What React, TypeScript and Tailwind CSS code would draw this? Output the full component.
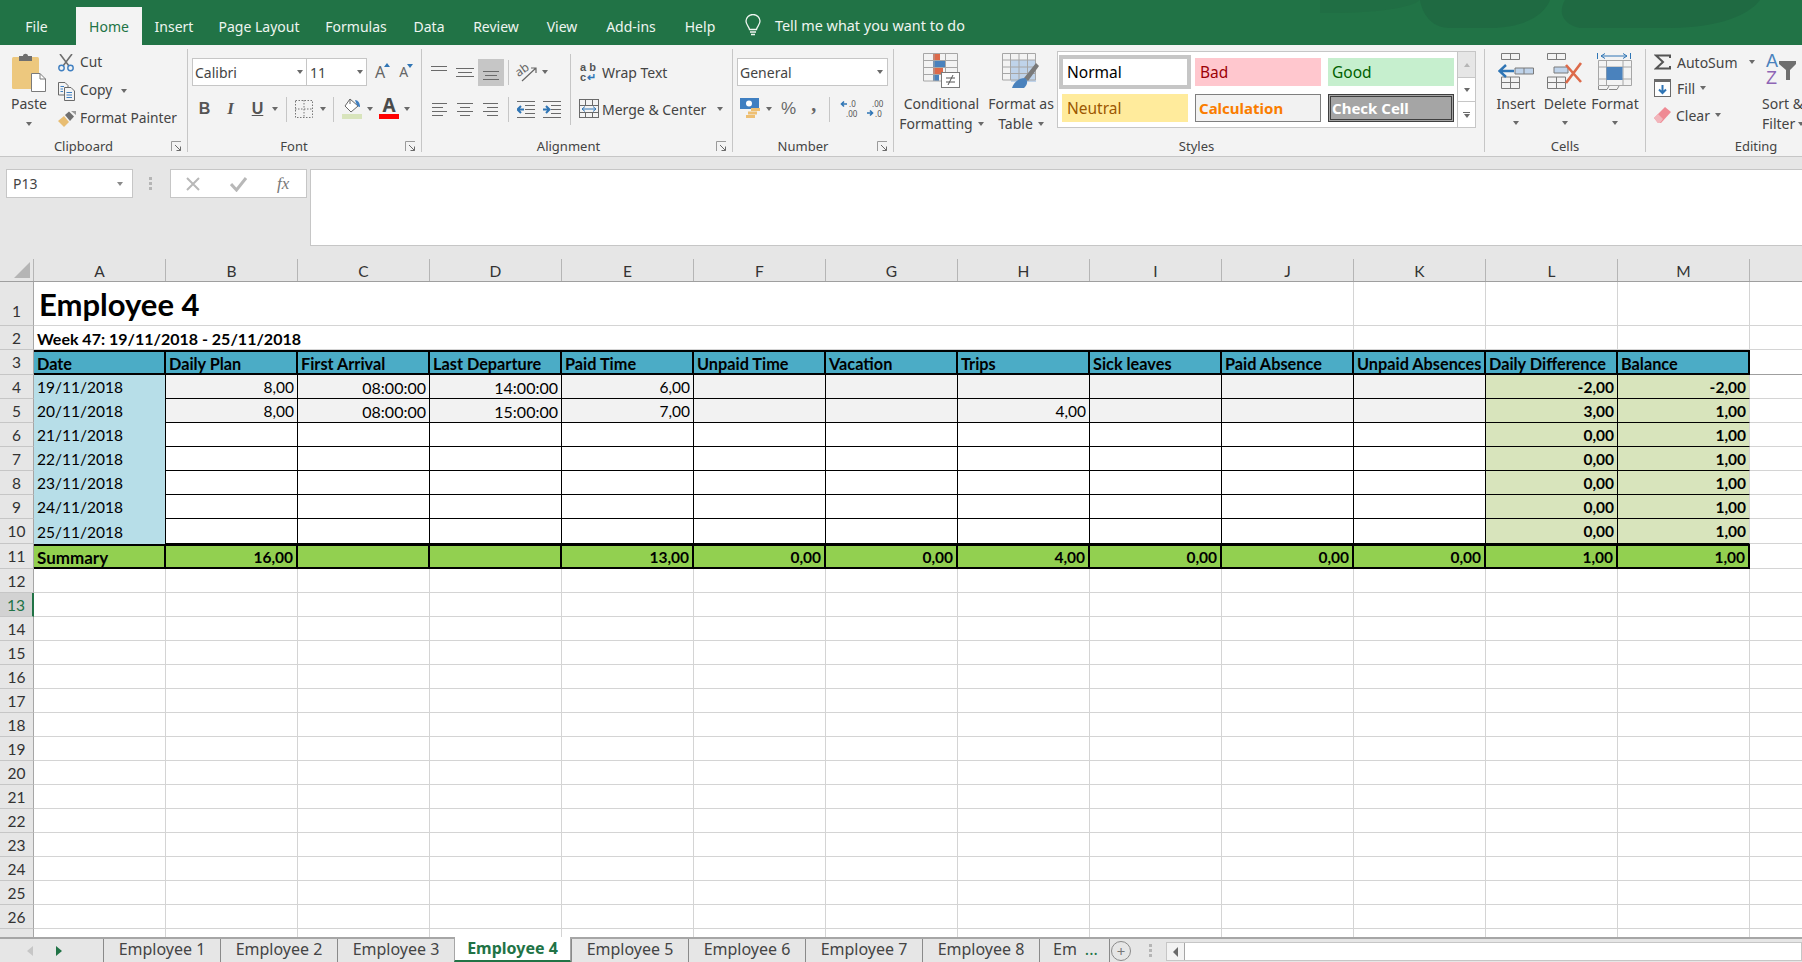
import type { ReactNode } from "react";

const tabs = [
  { label: "Insert", width: "w-[64px]" },
  { label: "Page Layout", width: "w-[106px]" },
  { label: "Formulas", width: "w-[88px]" },
  { label: "Data", width: "w-[58px]" },
  { label: "Review", width: "w-[76px]" },
  { label: "View", width: "w-[56px]" },
  { label: "Add-ins", width: "w-[82px]" },
  { label: "Help", width: "w-[56px]" },
];
const columns = ["A", "B", "C", "D", "E", "F", "G", "H", "I", "J", "K", "L", "M"];
const headers = ["Date", "Daily Plan", "First Arrival", "Last Departure", "Paid Time", "Unpaid Time", "Vacation", "Trips", "Sick leaves", "Paid Absence", "Unpaid Absences", "Daily Difference", "Balance"];
const sheetCols = "grid grid-cols-[34px_repeat(13,132px)_1fr]";
const sheetTabs = ["Employee 1", "Employee 2", "Employee 3", "Employee 4", "Employee 5", "Employee 6", "Employee 7", "Employee 8"];

const dataRows = [
  { n: 4, date: "19/11/2018", vals: ["8,00", "08:00:00", "14:00:00", "6,00", "", "", "", "", "", ""], l: "-2,00", m: "-2,00", gray: true },
  { n: 5, date: "20/11/2018", vals: ["8,00", "08:00:00", "15:00:00", "7,00", "", "", "4,00", "", "", ""], l: "3,00", m: "1,00", gray: true },
  { n: 6, date: "21/11/2018", vals: Array(10).fill(""), l: "0,00", m: "1,00", gray: false },
  { n: 7, date: "22/11/2018", vals: Array(10).fill(""), l: "0,00", m: "1,00", gray: false },
  { n: 8, date: "23/11/2018", vals: Array(10).fill(""), l: "0,00", m: "1,00", gray: false },
  { n: 9, date: "24/11/2018", vals: Array(10).fill(""), l: "0,00", m: "1,00", gray: false },
  { n: 10, date: "25/11/2018", vals: Array(10).fill(""), l: "0,00", m: "1,00", gray: false },
];
const summary = ["16,00", "", "", "13,00", "0,00", "0,00", "4,00", "0,00", "0,00", "0,00", "1,00", "1,00"];

const Caret = ({ className = "" }: { className?: string }) => (
  <span className={`inline-block h-0 w-0 border-x-[3.5px] border-t-[4px] border-x-transparent border-t-[#6a6a6a] ${className}`} />
);

const Launcher = () => (
  <svg width="11" height="11" viewBox="0 0 11 11" fill="none">
    <path d="M0.5 10V0.5H10" stroke="#9a9a9a" />
    <path d="M4 4L9.5 9.5M9.5 5.5V9.5H5.5" stroke="#6a6a6a" />
  </svg>
);

const Group = ({ width, label, launcher, labelClass = "", border = true, children }: { width: string; label: string; launcher?: boolean; labelClass?: string; border?: boolean; children: ReactNode }) => (
  <div className={`mt-[4px] flex h-[103px] shrink-0 flex-col ${border ? "border-r border-[#c6c6c6]" : ""} ${width}`}>
    <div className="h-[91px]">{children}</div>
    <div className={`relative flex h-[12px] items-center justify-center text-[13px] leading-none text-[#444] ${labelClass}`}>
      {label}
      {launcher && (
        <span className="absolute right-[5px] top-[1px]">
          <Launcher />
        </span>
      )}
    </div>
  </div>
);

const Lines = ({ w = 18, rows }: { w?: number; rows: number[][] }) => (
  <svg width={w} height="20" viewBox={`0 0 ${w} 20`} stroke="#6a6a6a">
    {rows.map(([a, b, y]) => (
      <path key={`${a}-${y}`} d={`M${a} ${y + 0.5}H${b}`} />
    ))}
  </svg>
);

const Paste = () => (
  <svg width="34" height="39" viewBox="0 0 34 39">
    <rect x="0" y="4" width="27" height="32" rx="1.5" fill="#edc87e" />
    <path d="M7 3H11C11 0 16 0 16 3H20V8H7Z" fill="#6f6f6f" />
    <path d="M19.5 20.5H28L33.5 26V38.5H19.5Z" fill="#fff" stroke="#7a7a7a" />
    <path d="M28 20.5V26H33.5" fill="none" stroke="#7a7a7a" />
  </svg>
);

const Cut = () => (
  <svg width="16" height="18" viewBox="0 0 16 18" fill="none">
    <path d="M2 0L11 12M14 0L5 12" stroke="#6f6f6f" strokeWidth="1.6" />
    <circle cx="3.5" cy="14" r="2.7" stroke="#3f7fc1" strokeWidth="1.4" />
    <circle cx="12.5" cy="14" r="2.7" stroke="#3f7fc1" strokeWidth="1.4" />
  </svg>
);

const Copy = () => (
  <svg width="18" height="19" viewBox="0 0 18 19" fill="none" stroke="#6a6a6a">
    <path d="M0.5 0.5H7L10 3.5V13H0.5Z" fill="#f3f3f3" />
    <path d="M6.5 5.5H13L16.5 9V18.5H6.5Z" fill="#f3f3f3" />
    <path d="M2.5 4.5H6M2.5 7H5M2.5 9.5H5M8.5 10.5H14M8.5 13H14M8.5 15.5H14" stroke="#3f7fc1" />
  </svg>
);

const Painter = () => (
  <svg width="18" height="17" viewBox="0 0 18 17">
    <path d="M0 10L6 5L11 11L6 16C4 14 2 12 0 10Z" fill="#e8bd72" />
    <path d="M7 4L11 0.5L16 5.5L12 10Z" fill="#6f6f6f" />
    <path d="M13 0L18 0L18 4Z" fill="#9a9a9a" />
  </svg>
);

const Borders = () => (
  <svg width="18" height="18" viewBox="0 0 18 18" fill="none" stroke="#777" strokeDasharray="1.5 1.5">
    <rect x="0.5" y="0.5" width="17" height="17" />
    <path d="M9 0V18M0 9H18" />
  </svg>
);

const Fill = () => (
  <svg width="20" height="22" viewBox="0 0 20 22">
    <path d="M8 1L16 8L9 14L3 8Z" fill="#fff" stroke="#666" />
    <path d="M8 1V6" stroke="#666" />
    <path d="M13 2C16 2 18 5 18 9C16 9 15 7 14 5Z" fill="#3f7fc1" />
    <rect x="0" y="16" width="20" height="5" fill="#d8e4bc" />
  </svg>
);

const FontColor = () => (
  <svg className="overflow-visible" width="20" height="22" viewBox="0 0 20 22">
    <text x="10" y="14" textAnchor="middle" fontSize="19" fontWeight="700" fontFamily="'Noto Sans', sans-serif" fill="#4a4a4a">A</text>
    <rect x="0" y="16" width="20" height="5" fill="#ff0000" />
  </svg>
);

const Orientation = () => (
  <svg className="overflow-visible" width="22" height="22" viewBox="0 0 22 22" fill="none" stroke="#666">
    <text x="0" y="12" fontSize="12" fill="#666" stroke="none" transform="rotate(-35 8 10)" fontFamily="'Noto Sans', sans-serif">ab</text>
    <path d="M6 20L20 7M15 7H20V12" strokeWidth="1.2" />
  </svg>
);

const Indent = ({ flip }: { flip?: boolean }) => (
  <svg width="18" height="17" viewBox="0 0 18 17" fill="none">
    <path d="M0 0.5H18M8 4.5H18M8 8.5H18M8 12.5H18M0 16.5H18" stroke="#6a6a6a" />
    {flip ? <path d="M0 8.5H6M3 5L6.5 8.5L3 12" stroke="#2f75b5" strokeWidth="2" /> : <path d="M7 8.5H1M4 5L0.5 8.5L4 12" stroke="#2f75b5" strokeWidth="2" />}
  </svg>
);

const Merge = () => (
  <svg width="20" height="20" viewBox="0 0 20 20" fill="none">
    <rect x="0.5" y="0.5" width="19" height="18" stroke="#6a6a6a" />
    <path d="M0 6.5H20M0 13.5H20M6.5 0V6M13.5 0V6M6.5 14V19M13.5 14V19" stroke="#6a6a6a" />
    <path d="M3 10H17M6 7.5L3 10L6 12.5M14 7.5L17 10L14 12.5" stroke="#2f75b5" />
  </svg>
);

const Currency = () => (
  <svg width="20" height="22" viewBox="0 0 20 22">
    <rect x="0" y="0" width="19" height="11" fill="#3f7fc1" />
    <circle cx="9" cy="5.5" r="3" fill="#fff" />
    <rect x="11" y="10" width="9" height="3" fill="#eebf72" />
    <rect x="8" y="13.5" width="9" height="3" fill="#eebf72" />
    <rect x="6" y="17" width="9" height="3" fill="#eebf72" />
  </svg>
);

const Decimal = ({ more }: { more?: boolean }) => (
  <svg className="overflow-visible" width="18" height="20" viewBox="0 0 18 20" fontFamily="'Noto Sans', sans-serif" fontSize="8" fill="#555">
    {more ? (
      <>
        <path d="M7 5H2M4 2.5L1.5 5L4 7.5" stroke="#2f75b5" strokeWidth="1.6" fill="none" />
        <text x="9" y="8">.0</text>
        <text x="6" y="18">.00</text>
      </>
    ) : (
      <>
        <text x="6" y="8">.00</text>
        <path d="M1 14H6M4 11.5L6.5 14L4 16.5" stroke="#2f75b5" strokeWidth="1.6" fill="none" />
        <text x="9" y="18">.0</text>
      </>
    )}
  </svg>
);

const CondFormat = () => (
  <svg width="38" height="35" viewBox="0 0 38 35">
    <rect x="10" y="0.5" width="7" height="7" fill="#dd6a4a" />
    <rect x="10" y="8" width="12" height="7" fill="#4a82bd" />
    <rect x="10" y="15" width="10" height="7" fill="#dd6a4a" />
    <rect x="10" y="22" width="6" height="6" fill="#4a82bd" />
    <path d="M0.5 0.5H34.5V28H0.5ZM11 0V28M22.5 0V28M0 7.5H35M0 14.5H35M0 21.5H35" fill="none" stroke="#a6a6a6" />
    <rect x="18.5" y="19.5" width="18" height="15" fill="#fff" stroke="#7a7a7a" />
    <path d="M23 25H32M23 29H32M30 22L25 32" stroke="#555" fill="none" />
  </svg>
);

const FormatTable = () => (
  <svg width="38" height="35" viewBox="0 0 38 35">
    <rect x="9" y="7" width="25" height="22" fill="#bfd3ea" />
    <path d="M0.5 0.5H33.5V27H0.5ZM8.5 0V27M17 0V27M25.5 0V27M0 7H34M0 14H34M0 20.5H34" fill="none" stroke="#a6a6a6" />
    <path d="M22 25L34 10L37 13L26 28Z" fill="#7a7a7a" />
    <path d="M10 35C12 28 18 25 23 25C26 27 26 31 22 35Z" fill="#4a82bd" />
  </svg>
);

const InsertIcon = () => (
  <svg width="37" height="36" viewBox="0 0 37 36" fill="none" stroke="#7a7a7a">
    <path d="M3.5 0.5H21.5V6.5H3.5ZM12.5 0V6M3.5 24H21.5V35.5H3.5ZM3.5 29.5H21.5M12.5 24V36" />
    <path d="M17 15H35.5V21H17ZM26 15V21" fill="#bfd3ea" />
    <path d="M16 18H2M8 12L1.5 18L8 24" stroke="#2f75b5" strokeWidth="2.4" />
  </svg>
);

const DeleteIcon = () => (
  <svg width="36" height="36" viewBox="0 0 36 36" fill="none" stroke="#7a7a7a">
    <path d="M0.5 0.5H18.5V6.5H0.5ZM9.5 0V6M0.5 24H18.5V35.5H0.5ZM0.5 29.5H18.5M9.5 24V36" />
    <path d="M7 14H21V20H7Z" fill="#bfd3ea" />
    <path d="M19 12L34 29M34 10L19 30" stroke="#dd6a4a" strokeWidth="2.6" />
  </svg>
);

const FormatIcon = () => (
  <svg width="36" height="37" viewBox="0 0 36 37" fill="none">
    <path d="M0.5 0V6M33.5 0V6M4 3H30M8 0.5L4 3L8 5.5M26 0.5L30 3L26 5.5" stroke="#2f75b5" />
    <path d="M1.5 7.5H34.5V32.5H1.5ZM9.5 8V32M26 8V32M1 14H35M1 26H35" stroke="#a6a6a6" />
    <rect x="9.5" y="14" width="16" height="13" fill="#4a82bd" />
    <path d="M1.5 33V36.5H10L12 33M12 36.5H20L22 33" stroke="#8a8a8a" />
  </svg>
);

const LargeButton = ({ icon, lines, caret, width }: { icon: ReactNode; lines: string[]; caret?: boolean; width: string }) => (
  <div className={`flex shrink-0 flex-col items-center ${width}`}>
    <div className="flex h-[45px] items-start pt-[4px]">{icon}</div>
    {lines.map((line, i) => (
      <div key={line} className="flex h-[20px] items-center gap-[5px] whitespace-nowrap text-[14px] leading-none text-[#444]">
        {line}
        {caret && i === lines.length - 1 && <Caret />}
      </div>
    ))}
  </div>
);

const ClipboardGroup = () => (
  <Group width="w-[188px]" label="Clipboard" launcher labelClass="pr-[20px]">
    <div className="flex">
      <div className="flex w-[58px] flex-col items-center pt-[4px]">
        <Paste />
        <div className="mt-[2px] text-[14px] leading-[20px] text-[#444]">Paste</div>
        <Caret className="mt-[8px]" />
      </div>
      <div className="flex flex-col text-[13.8px] text-[#444]">
        <div className="flex h-[28px] items-center">
          <span className="flex w-[22px] justify-start"><Cut /></span>
          <span className="mt-[-2px]">Cut</span>
        </div>
        <div className="flex h-[28px] items-center">
          <span className="flex w-[22px] justify-start"><Copy /></span>
          <span className="mt-[-2px]">Copy</span>
          <Caret className="ml-[9px]" />
        </div>
        <div className="flex h-[28px] items-center">
          <span className="flex w-[22px] justify-start"><Painter /></span>
          <span className="mt-[-2px]">Format Painter</span>
        </div>
      </div>
    </div>
  </Group>
);

const FontGroup = () => (
  <Group width="w-[234px]" label="Font" launcher labelClass="pr-[21px]">
    <div className="flex flex-col gap-[9px] pl-[4px] pt-[9px]">
      <div className="flex h-[28px] items-center">
        <div className="flex h-[28px] w-[115px] items-center justify-between border border-[#c6c6c6] bg-white pl-[2px] pr-[3px] text-[14px] text-[#444]">
          Calibri <Caret />
        </div>
        <div className="flex h-[28px] w-[60px] items-center justify-between border border-l-0 border-[#c6c6c6] bg-white pl-[3px] pr-[3px] text-[14px] text-[#444]">
          11 <Caret />
        </div>
        <span className="ml-[8px] flex items-start text-[16px] leading-none text-[#666]">
          A<span className="ml-[-1px] mt-[-1px] h-0 w-0 border-x-[3px] border-b-[4px] border-x-transparent border-b-[#2f75b5]" />
        </span>
        <span className="ml-[9px] flex items-start text-[14px] leading-none text-[#666]">
          A<span className="ml-[-1px] mt-[-1px] h-0 w-0 border-x-[3px] border-t-[4px] border-x-transparent border-t-[#2f75b5]" />
        </span>
      </div>
      <div className="flex h-[28px] items-center pl-[1px]">
        <span className="w-[23px] text-center font-['Liberation_Sans',sans-serif] text-[16px] font-bold text-[#555]">B</span>
        <span className="ml-[3px] w-[23px] text-center font-['Liberation_Serif',serif] text-[17px] font-bold italic text-[#555]">I</span>
        <span className="ml-[4px] w-[23px] text-center font-['Liberation_Sans',sans-serif] text-[16px] font-bold text-[#555] underline">U</span>
        <Caret className="ml-[3px]" />
        <div className="ml-[8px] h-[25px] w-px bg-[#c6c6c6]" />
        <span className="ml-[8px]"><Borders /></span>
        <Caret className="ml-[7px]" />
        <div className="ml-[7px] h-[25px] w-px bg-[#c6c6c6]" />
        <span className="ml-[8px]"><Fill /></span>
        <Caret className="ml-[5px]" />
        <span className="ml-[6px]"><FontColor /></span>
        <Caret className="ml-[5px]" />
      </div>
    </div>
  </Group>
);

const AlignmentGroup = () => (
  <Group width="w-[311px]" label="Alignment" launcher labelClass="pr-[17px]">
    <div className="flex pl-[8px] pt-[5px]">
      <div className="flex flex-col gap-[9px] pt-[4px]">
        <div className="flex h-[28px] items-center">
          <Lines rows={[[1, 17, 4], [1, 17, 8]]} />
          <span className="ml-[8px]"><Lines rows={[[0, 18, 6], [2, 16, 10], [0, 18, 14]]} /></span>
          <span className="ml-[4px] flex h-[27px] w-[26px] items-center justify-center bg-[#c6c6c6]">
            <Lines rows={[[2, 18, 9], [4, 16, 13], [2, 18, 17]]} w={20} />
          </span>
          <div className="ml-[4px] h-[25px] w-px bg-[#c6c6c6]" />
          <span className="ml-[7px]"><Orientation /></span>
          <Caret className="ml-[4px]" />
        </div>
        <div className="flex h-[28px] items-center">
          <span className="ml-[2px]"><Lines rows={[[0, 15, 4], [0, 11, 8], [0, 15, 12], [0, 11, 16]]} w={16} /></span>
          <span className="ml-[9px]"><Lines rows={[[0, 16, 4], [3, 13, 8], [0, 16, 12], [3, 13, 16]]} w={16} /></span>
          <span className="ml-[10px]"><Lines rows={[[0, 15, 4], [4, 15, 8], [0, 15, 12], [4, 15, 16]]} w={16} /></span>
          <div className="ml-[9px] h-[25px] w-px bg-[#c6c6c6]" />
          <span className="ml-[8px]"><Indent /></span>
          <span className="ml-[8px]"><Indent flip /></span>
        </div>
      </div>
      <div className="ml-[9px] h-[71px] w-px bg-[#c6c6c6]" />
      <div className="ml-[9px] flex flex-col gap-[9px] pt-[4px] text-[14px] text-[#444]">
        <div className="flex h-[28px] items-center">
          <span className="flex w-[22px] flex-col font-['Liberation_Sans',sans-serif] text-[11px] font-bold leading-[10px] text-[#555]">
            <span>a b</span>
            <span className="flex items-center">c<span className="ml-[1px] text-[#2f75b5]">↵</span></span>
          </span>
          Wrap Text
        </div>
        <div className="flex h-[28px] items-center">
          <span className="ml-[-1px] w-[23px]"><Merge /></span>
          Merge &amp; Center
          <Caret className="ml-[11px]" />
        </div>
      </div>
    </div>
  </Group>
);

const NumberGroup = () => (
  <Group width="w-[161px]" label="Number" launcher labelClass="pr-[20px]">
    <div className="flex flex-col gap-[9px] pl-[4px] pt-[9px]">
      <div className="flex h-[28px] w-[151px] items-center justify-between border border-[#c6c6c6] bg-white pl-[2px] pr-[4px] text-[14px] text-[#444]">
        General <Caret />
      </div>
      <div className="flex h-[28px] items-center pl-[3px] text-[#666]">
        <Currency />
        <Caret className="ml-[6px]" />
        <span className="ml-[9px] font-['Liberation_Sans',sans-serif] text-[17px]">%</span>
        <span className="mb-[10px] ml-[15px] w-[10px] font-['Liberation_Serif',serif] text-[20px] font-bold leading-none">,</span>
        <div className="ml-[8px] h-[25px] w-px bg-[#c6c6c6]" />
        <span className="ml-[10px]"><Decimal more /></span>
        <span className="ml-[8px]"><Decimal /></span>
      </div>
    </div>
  </Group>
);

const styleBase = "flex h-[28px] w-[126px] items-center text-[15.5px] leading-none";

const StylesGroup = () => (
  <Group width="w-[591px]" label="Styles" labelClass="pl-[15px]">
    <div className="flex">
      <LargeButton icon={<CondFormat />} lines={["Conditional", "Formatting"]} caret width="w-[97px] ml-[-1px]" />
      <LargeButton icon={<FormatTable />} lines={["Format as", "Table"]} caret width="w-[66px] ml-[-2px]" />
      <div className="ml-[3px] mt-[2px] flex h-[77px] w-[419px] border border-[#c6c6c6] bg-white">
        <div className="grid flex-1 grid-cols-[126px_126px_126px] content-start gap-x-[7px] gap-y-[8px] pl-[4px] pt-[6px]">
          <div className={`${styleBase} bg-white pl-[5px] pt-[2px] text-black outline-4 -outline-offset-1 outline-[#c6c6c6]`}>Normal</div>
          <div className={`${styleBase} bg-[#ffc7ce] pl-[5px] pt-[2px] text-[#9c0006]`}>Bad</div>
          <div className={`${styleBase} bg-[#c6efce] pl-[4px] pt-[2px] text-[#006100]`}>Good</div>
          <div className={`${styleBase} bg-[#ffeb9c] pl-[5px] pt-[2px] text-[#9c5700]`}>Neutral</div>
          <div className={`${styleBase} border border-[#7f7f7f] bg-[#f2f2f2] pl-[3px] text-[15px] font-bold text-[#fa7d00]`}>Calculation</div>
          <div className={`${styleBase} border-[3px] border-double border-[#3f3f3f] bg-[#a5a5a5] pl-[1px] text-[15px] font-bold text-white`}>Check Cell</div>
        </div>
        <div className="flex w-[18px] flex-col border-l border-[#c6c6c6]">
          <div className="flex h-[26px] items-center justify-center border-b border-[#c6c6c6] bg-[#e6e6e6]">
            <span className="h-0 w-0 border-x-[3.5px] border-b-[4px] border-x-transparent border-b-[#b5b5b5]" />
          </div>
          <div className="flex h-[24px] items-center justify-center border-b border-[#c6c6c6]">
            <Caret />
          </div>
          <div className="flex flex-1 flex-col items-center justify-center gap-[1px]">
            <span className="h-px w-[7px] bg-[#6a6a6a]" />
            <Caret />
          </div>
        </div>
      </div>
    </div>
  </Group>
);

const CellsGroup = () => (
  <Group width="w-[161px]" label="Cells">
    <div className="flex pl-[10px]">
      <div className="flex w-[42px] flex-col items-center">
        <LargeButton icon={<InsertIcon />} lines={["Insert"]} width="w-[42px]" />
        <Caret className="mt-[7px]" />
      </div>
      <div className="ml-[7px] flex w-[42px] flex-col items-center">
        <LargeButton icon={<DeleteIcon />} lines={["Delete"]} width="w-[42px]" />
        <Caret className="mt-[7px]" />
      </div>
      <div className="ml-[8px] flex w-[42px] flex-col items-center">
        <LargeButton icon={<FormatIcon />} lines={["Format"]} width="w-[42px]" />
        <Caret className="mt-[7px]" />
      </div>
    </div>
  </Group>
);

const EditingGroup = () => (
  <Group width="w-[220px]" label="Editing" border={false}>
    <div className="flex pl-[8px] text-[14px] text-[#444]">
      <div className="flex w-[108px] shrink-0 flex-col">
        <div className="flex h-[26px] items-center">
          <svg width="17" height="16" viewBox="0 0 17 16" fill="none">
            <path d="M16 4V1.5H2L9 8L2 14.5H16V12" stroke="#555" strokeWidth="2" />
          </svg>
          <span className="ml-[6px]">AutoSum</span>
          <Caret className="ml-[11px]" />
        </div>
        <div className="flex h-[26px] items-center">
          <svg width="17" height="18" viewBox="0 0 17 18" fill="none">
            <rect x="0.5" y="0.5" width="16" height="17" stroke="#6a6a6a" fill="#fff" />
            <path d="M0 1H17V3H0Z" fill="#6a6a6a" />
            <path d="M8.5 6V14M5 10.5L8.5 14L12 10.5" stroke="#2f75b5" strokeWidth="2" />
          </svg>
          <span className="ml-[6px]">Fill</span>
          <Caret className="ml-[5px]" />
        </div>
        <div className="flex h-[28px] items-center">
          <svg width="17" height="17" viewBox="0 0 17 17">
            <path d="M0 11L11 0L17 5L7 16H4Z" fill="#ef8a94" />
            <path d="M0 11L4 7L9 12L6 16H4Z" fill="#f2b5bb" />
          </svg>
          <span className="ml-[5px]">Clear</span>
          <Caret className="ml-[5px]" />
        </div>
      </div>
      <div className="flex flex-col items-start whitespace-nowrap">
        <div className="flex h-[45px] items-start pl-[4px] pt-[4px]">
          <span className="flex flex-col font-['Liberation_Sans',sans-serif] text-[18px] leading-[17px]">
            <span className="text-[#4a82bd]">A</span>
            <span className="text-[#8e65b5]">Z</span>
          </span>
          <svg className="ml-[1px] mt-[8px]" width="17" height="19" viewBox="0 0 17 19">
            <path d="M0 0H17V3L11 9V19H7V9L0 3Z" fill="#6f6f6f" />
          </svg>
        </div>
        <div className="flex h-[20px] items-center leading-none">Sort &amp;</div>
        <div className="flex h-[20px] items-center gap-[3px] leading-none">Filter <Caret /></div>
      </div>
    </div>
  </Group>
);

const TitleBar = () => (
  <div className="relative flex h-[45px] shrink-0 items-end overflow-hidden bg-[#217346] text-[14px] text-[#eef5f0]">
    <svg className="absolute left-[1300px] top-0" width="480" height="30" viewBox="0 0 480 30" fill="#1f6a42">
      <path d="M20 0H120C112 8 70 14 20 13Z" opacity="0.5" />
      <path d="M120 0H250C245 14 225 28 190 28H150C130 28 122 12 120 0Z" />
      <path d="M265 0H460C450 14 420 28 370 28H280C262 24 258 12 265 0Z" />
    </svg>
    <div className="relative flex h-[38px] w-[73px] items-center justify-center">File</div>
    <div className="relative ml-[3px] flex h-[38px] w-[66px] items-center justify-center bg-[#f3f3f3] text-[#217346]">Home</div>
    {tabs.map((tab) => (
      <div key={tab.label} className={`relative flex h-[38px] items-center justify-center ${tab.width}`}>
        {tab.label}
      </div>
    ))}
    <div className="relative ml-[17px] flex h-[38px] items-center">
      <svg width="16" height="24" viewBox="0 0 16 24" fill="none" stroke="#eef5f0" strokeWidth="1.3">
        <path d="M4.5 15.5C4 12 1 11 1 7A7 6.5 0 0 1 15 7C15 11 12 12 11.5 15.5Z" />
        <path d="M5 18H11M6 20.5H10" />
      </svg>
      <span className="ml-[14px] text-[14.4px]">Tell me what you want to do</span>
    </div>
  </div>
);

const Ribbon = () => (
  <div className="flex h-[112px] shrink-0 overflow-hidden border-b border-[#c6c6c6] bg-[#f3f3f3]">
    <ClipboardGroup />
    <FontGroup />
    <AlignmentGroup />
    <NumberGroup />
    <StylesGroup />
    <CellsGroup />
    <EditingGroup />
  </div>
);

const FormulaBar = () => (
  <div className="flex h-[102px] shrink-0 items-start bg-[#e6e6e6] pt-[12px]">
    <div className="ml-[6px] flex h-[29px] w-[127px] items-center justify-between border border-[#c6c6c6] bg-white pl-[6px] pr-[9px] text-[14px] text-[#444]">
      P13 <Caret className="border-t-[#8a8a8a]" />
    </div>
    <div className="ml-[16px] mt-[8px] flex w-[4px] flex-col gap-[2px]">
      <span className="h-[3px] w-[3px] bg-[#b5b5b5]" />
      <span className="h-[3px] w-[3px] bg-[#b5b5b5]" />
      <span className="h-[3px] w-[3px] bg-[#b5b5b5]" />
    </div>
    <div className="ml-[17px] flex h-[29px] w-[137px] items-center border border-[#c6c6c6] bg-white pl-[14px]">
      <svg width="16" height="16" viewBox="0 0 16 16" fill="none" stroke="#b8b8b8" strokeWidth="2">
        <path d="M2 2L14 14M14 2L2 14" />
      </svg>
      <svg className="ml-[29px]" width="18" height="16" viewBox="0 0 18 16" fill="none" stroke="#b8b8b8" strokeWidth="3">
        <path d="M1 8L6.5 14L16 2" />
      </svg>
      <span className="ml-[29px] font-['Liberation_Serif',serif] text-[17px] italic leading-none text-[#777]">fx</span>
    </div>
    <div className="ml-[3px] h-[77px] flex-1 border border-r-0 border-[#c6c6c6] bg-white" />
  </div>
);

const RowHead = ({ n, active }: { n?: number; active?: boolean }) => (
  <div
    className={
      active
        ? "flex items-center justify-center border-b border-r-2 border-b-[#c6c6c6] border-r-[#217346] bg-[#d2d2d2] pt-[2px] text-[#217346]"
        : "flex items-center justify-center border-b border-r border-b-[#c6c6c6] border-r-[#a6a6a6] bg-[#e6e6e6] pt-[2px] text-[#333]"
    }
  >
    {n}
  </div>
);

const Grid = () => <div className="border-b border-r border-[#d4d4d4]" />;

const Sheet = () => (
  <div className="flex-1 overflow-hidden bg-white font-['Lato',sans-serif] text-[15.5px] leading-none text-black">
    <div className={`${sheetCols} h-[23px] border-b border-[#9f9f9f] bg-[#e6e6e6] text-[#333]`}>
      <div className="flex items-end justify-end border-r border-[#b5b5b5] pb-[3px] pr-[3px]">
        <span className="h-0 w-0 border-b-[16px] border-l-[16px] border-b-[#b5b5b5] border-l-transparent" />
      </div>
      {columns.map((c) => (
        <div key={c} className="flex items-center justify-center border-r border-[#b5b5b5] pt-[3px]">{c}</div>
      ))}
      <div />
    </div>

    <div className={`${sheetCols} h-[44px]`}>
      <div className="flex items-end justify-center border-b border-r border-b-[#c6c6c6] border-r-[#a6a6a6] bg-[#e6e6e6] pb-[6px] text-[#333]">1</div>
      <div className="col-span-10 flex items-center border-b border-r border-[#d4d4d4] pl-[5px] pt-[1px] text-[31px] font-bold">Employee 4</div>
      <Grid /><Grid /><Grid /><div className="border-b border-[#d4d4d4]" />
    </div>

    <div className={`${sheetCols} h-[24px]`}>
      <RowHead n={2} />
      <div className="col-span-10 flex items-center border-b border-r border-[#d4d4d4] pl-[3px] pt-[2px] text-[16px] font-bold">Week 47: 19/11/2018 - 25/11/2018</div>
      <Grid /><Grid /><Grid /><div className="border-b border-[#d4d4d4]" />
    </div>

    <div className={`${sheetCols} h-[25px]`}>
      <RowHead n={3} />
      {headers.map((h) => (
        <div key={h} className="flex items-center overflow-hidden whitespace-nowrap border-y-2 border-r-2 border-black bg-[#4bacc6] pl-[3px] pt-[3px] text-[16.3px] font-bold">{h}</div>
      ))}
      <div className="border-b border-[#9f9f9f]" />
    </div>

    {dataRows.map((row) => (
      <div key={row.n} className={`${sheetCols} ${row.n === 10 ? "h-[25px]" : "h-[24px]"}`}>
        <RowHead n={row.n} />
        <div className="flex items-center border-r border-black bg-[#b7dee8] pl-[3px] pt-[2px]">{row.date}</div>
        {row.vals.map((v, i) => (
          <div key={i} className={`flex items-center justify-end border-b border-r border-black pr-[3px] pt-[2px] ${v.length > 5 ? "text-[16px]" : ""} ${row.gray ? "bg-[#f2f2f2]" : "bg-white"}`}>{v}</div>
        ))}
        <div className="flex items-center justify-end border-b border-r border-black bg-[#d8e4bc] pr-[3px] pt-[2px] font-bold">{row.l}</div>
        <div className="flex items-center justify-end border-b border-r border-b-black border-r-[#d4d4d4] bg-[#d8e4bc] pr-[3px] pt-[2px] font-bold">{row.m}</div>
        <div className="border-b border-[#d4d4d4]" />
      </div>
    ))}

    <div className={`${sheetCols} h-[25px]`}>
      <RowHead n={11} />
      <div className="flex items-center border-y-2 border-r-2 border-black bg-[#92d050] pl-[3px] pt-[2px] text-[17px] font-bold">Summary</div>
      {summary.map((v, i) => (
        <div key={i} className="flex items-center justify-end border-y-2 border-r-2 border-black bg-[#92d050] pr-[3px] pt-[2px] font-bold">{v}</div>
      ))}
      <div className="border-b border-[#d4d4d4]" />
    </div>

    {Array.from({ length: 16 }, (_, i) => i + 12).map((n) => (
      <div key={n} className={`${sheetCols} h-[24px]`}>
        <RowHead n={n === 27 ? undefined : n} active={n === 13} />
        {columns.map((c) => (
          <Grid key={c} />
        ))}
        <div className="border-b border-[#d4d4d4]" />
      </div>
    ))}
  </div>
);

const TabBar = () => (
  <div className="flex h-[25px] shrink-0 border-t-2 border-[#a6a6a6] bg-[#e6e6e6] text-[16px] text-[#444]">
    <div className="flex w-[103px] items-center pl-[27px]">
      <span className="h-0 w-0 border-y-[5px] border-r-[6px] border-y-transparent border-r-[#c6c6c6]" />
      <span className="ml-[23px] h-0 w-0 border-y-[5px] border-l-[6px] border-y-transparent border-l-[#217346]" />
    </div>
    {sheetTabs.map((tab) =>
      tab === "Employee 4" ? (
        <div key={tab} className="relative z-10 mt-[-2px] flex h-[25px] w-[117px] items-center justify-center border-x border-b-2 border-x-[#a6a6a6] border-b-[#217346] bg-white pb-[2px] font-bold text-[#217346]">{tab}</div>
      ) : (
        <div key={tab} className="flex w-[117px] items-center justify-center border-l border-[#8a8a8a] pb-[3px]">{tab}</div>
      )
    )}
    <div className="flex w-[71px] items-center border-x border-[#8a8a8a] pb-[3px] pl-[13px]">
      Em <span className="ml-[8px] text-[#217346]">...</span>
    </div>
    <span className="ml-[1px] mt-[2px] flex h-[20px] w-[20px] items-center justify-center rounded-full border border-[#8a8a8a] text-[15px] leading-none text-[#777]">+</span>
    <div className="ml-[18px] mt-[5px] flex w-[3px] flex-col gap-[2px]">
      <span className="h-[3px] w-[3px] bg-[#b5b5b5]" />
      <span className="h-[3px] w-[3px] bg-[#b5b5b5]" />
      <span className="h-[3px] w-[3px] bg-[#b5b5b5]" />
    </div>
    <div className="ml-[14px] mt-[3px] flex h-[19px] flex-1 border border-[#c6c6c6] bg-white">
      <div className="flex w-[18px] items-center justify-center border-r border-[#a6a6a6] bg-[#f3f3f3]">
        <span className="h-0 w-0 border-y-[5px] border-r-[5px] border-y-transparent border-r-[#6a6a6a]" />
      </div>
    </div>
  </div>
);

export default function App() {
  return (
    <div className="flex h-[962px] w-[1802px] flex-col overflow-hidden bg-white font-['Noto_Sans',sans-serif]">
      <TitleBar />
      <Ribbon />
      <FormulaBar />
      <Sheet />
      <TabBar />
    </div>
  );
}
